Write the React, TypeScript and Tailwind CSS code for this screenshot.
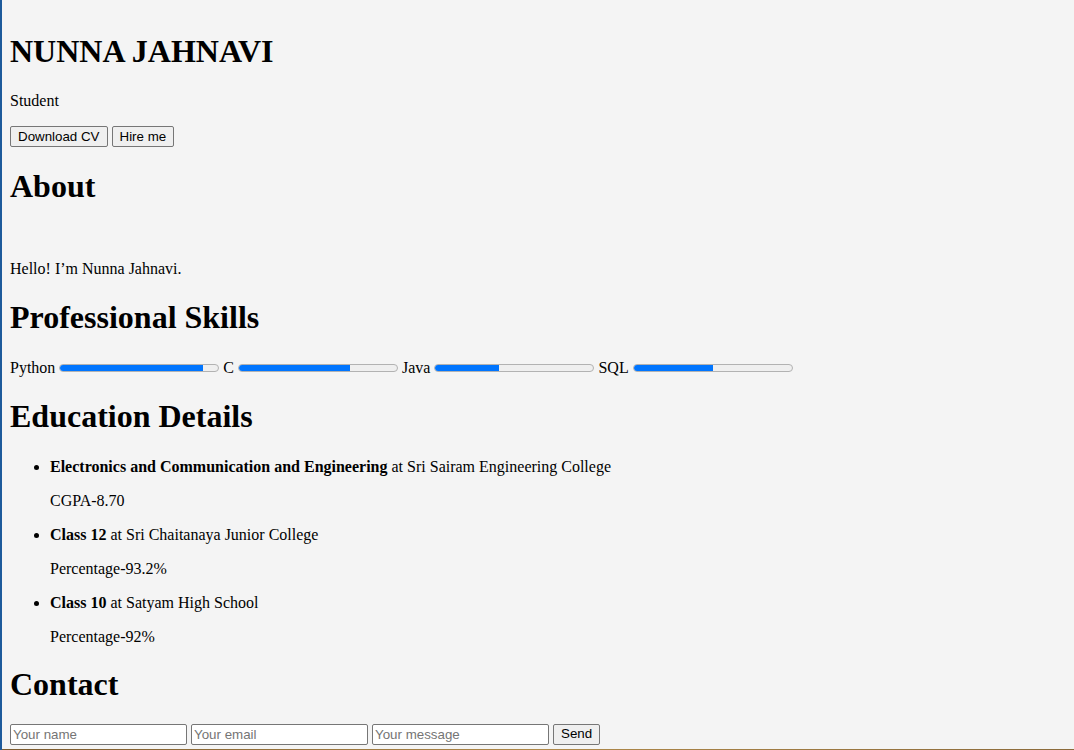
import React from "react";

const skills = [
  { name: "Python", level: 90 },
  { name: "C", level: 70 },
  { name: "Java", level: 40 },
  { name: "SQL", level: 50 },
];

const education = [
  { title: "Electronics and Communication and Engineering", place: "Sri Sairam Engineering College", score: "CGPA-8.70" },
  { title: "Class 12", place: "Sri Chaitanaya Junior College", score: "Percentage-93.2%" },
  { title: "Class 10", place: "Satyam High School", score: "Percentage-92%" },
];

function Heading({ children, className = "" }: { children: React.ReactNode; className?: string }) {
  return <h2 className={`text-[32px] leading-[37px] font-bold ${className}`}>{children}</h2>;
}

function SkillBar({ level }: { level: number }) {
  return (
    <div className="relative w-[160px] h-[8px] rounded-full border border-[#b2b2b2] bg-[#efefef] overflow-hidden">
      <div className="absolute left-0 top-[-1px] bottom-[-1px] bg-[#0075ff] rounded-l-full" style={{ width: `${level}%` }} />
    </div>
  );
}

const ctrl = "font-['Liberation_Sans',Arial,sans-serif] text-[13.33px] text-black";
const btn = `${ctrl} h-[21px] px-[7px] border border-[#767676] rounded-[2px] bg-[#efefef]`;
const field = `${ctrl} w-[177px] h-[21px] px-[2px] bg-white border border-[#767676] rounded-[2px] placeholder:text-[#757575]`;

export default function App() {
  return (
    <div className="min-h-[750px] h-[750px] overflow-hidden bg-[#f4f4f4] border-l-2 border-[#1d5a9b] pl-[8px] pt-[33px] text-black text-[16px] leading-[18px] font-['Liberation_Serif','Times_New_Roman',serif] relative">
      <h1 className="text-[32px] leading-[37px] font-bold">NUNNA JAHNAVI</h1>
      <p className="mt-[22px]">Student</p>
      <div className="mt-[16px] flex gap-[4px]">
        <button className={btn}>Download CV</button>
        <button className={btn}>Hire me</button>
      </div>

      <Heading className="mt-[20.5px]">About</Heading>
      <p className="mt-[55.5px]">Hello! I’m Nunna Jahnavi.</p>

      <Heading className="mt-[21px]">Professional Skills</Heading>
      <div className="mt-[23px] flex items-center gap-[4px]">
        {skills.map((s) => (
          <React.Fragment key={s.name}>
            <span>{s.name}</span>
            <SkillBar level={s.level} />
          </React.Fragment>
        ))}
      </div>

      <Heading className="mt-[21px]">Education Details</Heading>
      <ul className="mt-[23px] pl-[40px] list-disc">
        {education.map((e) => (
          <li key={e.title}>
            <strong>{e.title}</strong> at {e.place}
            <p className="my-[16px]">{e.score}</p>
          </li>
        ))}
      </ul>

      <Heading className="mt-[19.6px]">Contact</Heading>
      <form className="mt-[21px] flex gap-[4px]" onSubmit={(ev) => ev.preventDefault()}>
        <input placeholder="Your name" className={field} />
        <input placeholder="Your email" className={field} />
        <input placeholder="Your message" className={field} />
        <button type="submit" className={btn}>Send</button>
      </form>
      <div className="absolute left-0 right-0 bottom-0 h-[1px] bg-gradient-to-r from-[#7a5a2e] via-[#b08a4a] to-[#8a6a3a]" />
    </div>
  );
}
